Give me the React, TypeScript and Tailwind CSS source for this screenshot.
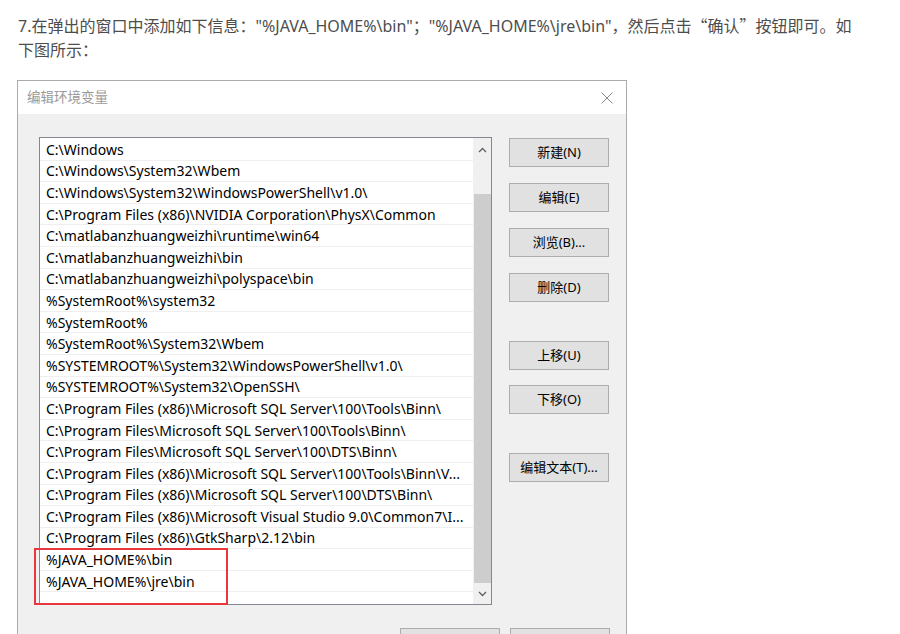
import React from 'react';

const paths = [
  'C:\\Windows',
  'C:\\Windows\\System32\\Wbem',
  'C:\\Windows\\System32\\WindowsPowerShell\\v1.0\\',
  'C:\\Program Files (x86)\\NVIDIA Corporation\\PhysX\\Common',
  'C:\\matlabanzhuangweizhi\\runtime\\win64',
  'C:\\matlabanzhuangweizhi\\bin',
  'C:\\matlabanzhuangweizhi\\polyspace\\bin',
  '%SystemRoot%\\system32',
  '%SystemRoot%',
  '%SystemRoot%\\System32\\Wbem',
  '%SYSTEMROOT%\\System32\\WindowsPowerShell\\v1.0\\',
  '%SYSTEMROOT%\\System32\\OpenSSH\\',
  'C:\\Program Files (x86)\\Microsoft SQL Server\\100\\Tools\\Binn\\',
  'C:\\Program Files\\Microsoft SQL Server\\100\\Tools\\Binn\\',
  'C:\\Program Files\\Microsoft SQL Server\\100\\DTS\\Binn\\',
  'C:\\Program Files (x86)\\Microsoft SQL Server\\100\\Tools\\Binn\\V...',
  'C:\\Program Files (x86)\\Microsoft SQL Server\\100\\DTS\\Binn\\',
  'C:\\Program Files (x86)\\Microsoft Visual Studio 9.0\\Common7\\I...',
  'C:\\Program Files (x86)\\GtkSharp\\2.12\\bin',
  '%JAVA_HOME%\\bin',
  '%JAVA_HOME%\\jre\\bin',
];

const ui = { fontFamily: '"Noto Sans", "Noto Sans CJK SC", sans-serif' };
const cjk = { fontFamily: '"Noto Sans CJK SC", sans-serif' };

function Btn({ label, className = '' }: { label?: string; className?: string }) {
  return (
    <div
      className={`flex h-[29px] w-[100px] items-center justify-center border border-[#adadad] bg-[#e1e1e1] text-[13px] text-black ${className}`}
      style={ui}
    >
      {label}
    </div>
  );
}

function Chevron({ up }: { up?: boolean }) {
  return (
    <svg width="9" height="6" viewBox="0 0 9 6" className={up ? '' : 'rotate-180'}>
      <path d="M1 5 L4.5 1.5 L8 5" fill="none" stroke="#606060" strokeWidth="1.3" />
    </svg>
  );
}

export default function App() {
  return (
    <div className="relative h-[634px] w-[900px] overflow-hidden bg-white">
      <p
        className="w-[860px] pl-[18px] pt-[13px] text-[16px] leading-[24px] text-[#4d4d4d]"
        style={{ fontFamily: '"Noto Sans", "Noto Sans CJK SC", sans-serif' }}
      >
        7.在弹出的窗口中添加如下信息："%JAVA_HOME%\bin"；"%JAVA_HOME%\jre\bin"，然后点击
        <span style={cjk}>“确认”</span>按钮即可。如下图所示：
      </p>

      <div className="relative ml-[17px] mt-[18px] w-[610px] border border-[#ababab]">
        {/* title bar */}
        <div className="flex h-[33px] items-center justify-between bg-white pl-[9px] pr-[13px]">
          <span className="text-[13.5px] text-[#9a9a9a]" style={ui}>
            编辑环境变量
          </span>
          <svg width="12" height="12" viewBox="0 0 12 12">
            <path d="M0.5 0.5 L11.5 11.5 M11.5 0.5 L0.5 11.5" stroke="#8a8a8a" strokeWidth="1" />
          </svg>
        </div>

        {/* body */}
        <div className="bg-[#f0f0f0] pl-[21px] pr-[16px] pt-[23px] pb-[40px]">
          <div className="flex gap-[17px]">
            <div className="flex h-[468px] w-[453px] border border-[#828790] bg-white">
              <div className="flex-1 pt-[1px]">
                {paths.map((p) => (
                  <div
                    key={p}
                    className="flex h-[21.6px] items-center border-b border-[#efefef] pl-[6px] text-[14px] text-black"
                    style={ui}
                  >
                    <span className="whitespace-nowrap">{p}</span>
                  </div>
                ))}
              </div>
              <div className="flex w-[18px] flex-col items-center bg-[#f0f0f0]">
                <div className="flex h-[22px] items-center justify-center pt-[2px]">
                  <Chevron up />
                </div>
                <div className="mt-[34px] h-[389px] w-[17px] bg-[#cdcdcd]" />
                <div className="flex flex-1 items-center justify-center">
                  <Chevron />
                </div>
              </div>
            </div>

            <div className="flex flex-col">
              <Btn label="新建(N)" className="mt-[1px]" />
              <Btn label="编辑(E)" className="mt-[16px]" />
              <Btn label="浏览(B)..." className="mt-[16px]" />
              <Btn label="删除(D)" className="mt-[16px]" />
              <Btn label="上移(U)" className="mt-[39px]" />
              <Btn label="下移(O)" className="mt-[15px]" />
              <Btn label="编辑文本(T)..." className="mt-[39px]" />
            </div>
          </div>

          <div className="mt-[23px] flex justify-end gap-[10px]">
            <Btn />
            <Btn />
          </div>
        </div>

        {/* highlight box */}
        <div className="absolute left-[16px] top-[467px] h-[57px] w-[194px] border-2 border-[#e8383d]" />
      </div>
    </div>
  );
}
